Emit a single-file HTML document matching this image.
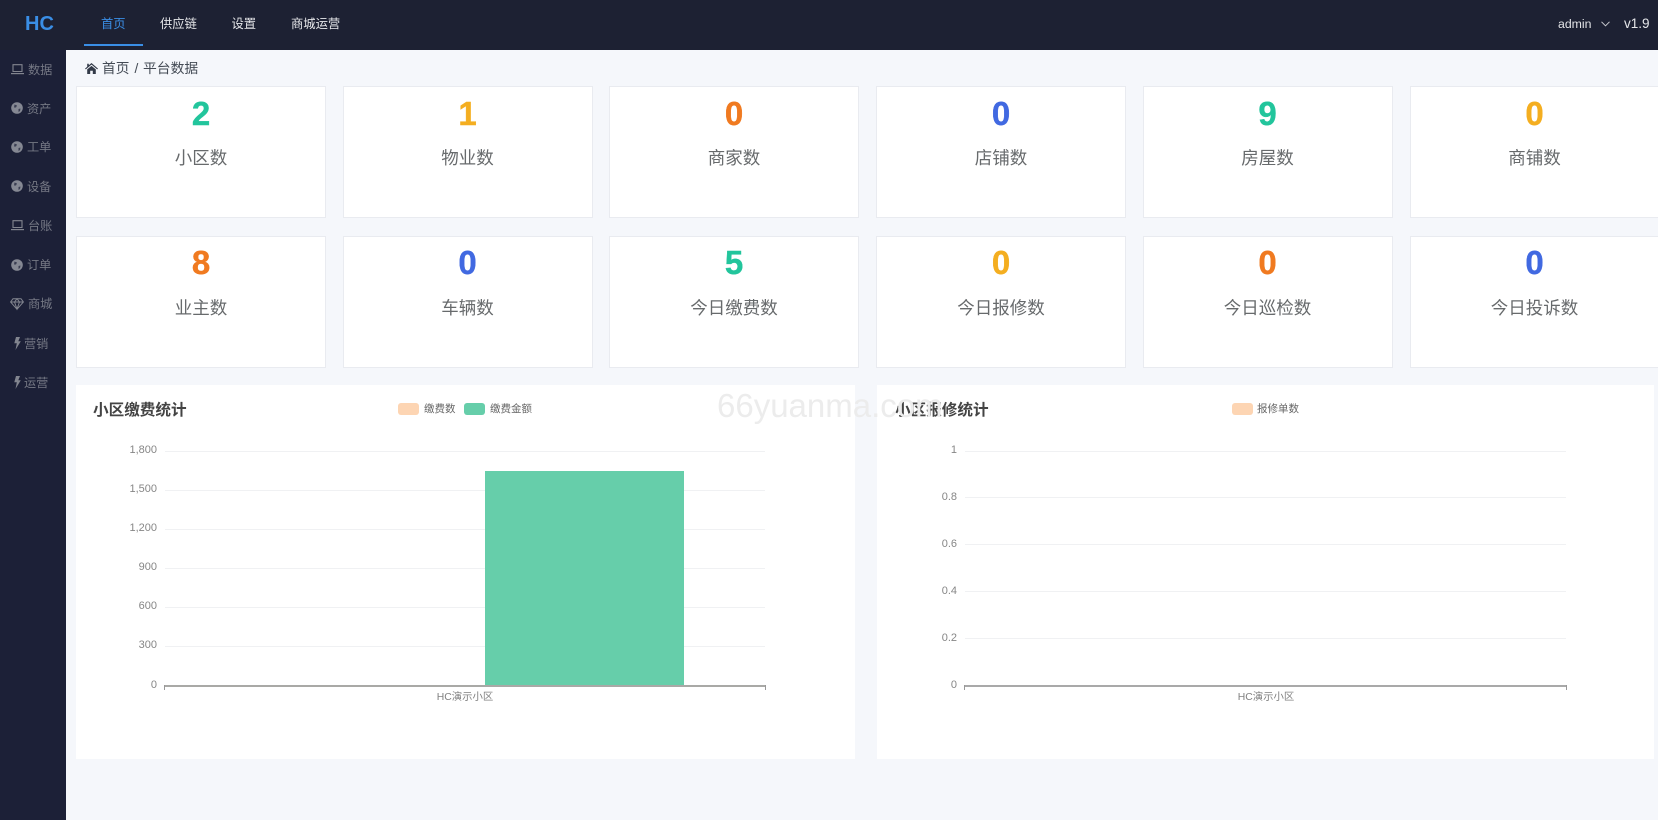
<!DOCTYPE html>
<html lang="zh"><head><meta charset="utf-8"><title>HC</title>
<style>
*{margin:0;padding:0;box-sizing:border-box}
html,body{width:1658px;height:820px;overflow:hidden;background:#f5f7fb}
body{position:relative;font-family:"Liberation Sans","Noto Sans CJK SC",sans-serif}
.a{position:absolute;white-space:nowrap}
#top{left:0;top:0;width:1658px;height:50px;background:#1d2133}
#side{left:0;top:50px;width:66px;height:770px;background:#1c2037}
.nav{top:14px;line-height:20px;font-size:12.3px;color:#e6e7ea}
.s{font-size:12.2px;line-height:18px;color:#757884}
.card{width:249.5px;height:132px;background:#fff;border:1px solid #e9ebf0}
.num{width:250px;text-align:center;font-size:33px;font-weight:700;line-height:36px;-webkit-text-stroke:.4px currentColor}
.lab{width:250px;text-align:center;font-size:17.5px;line-height:24px;color:#676a6c}
.g{color:#22c59c}.o{color:#f07a20}.y{color:#f4ae20}.b{color:#4169e1}
.panel{top:385px;height:374px;background:#fff}
.title{top:400px;font-size:15.6px;font-weight:700;line-height:22px;color:#444}
.leg{top:402px;font-size:10.5px;line-height:14px;color:#666}
.sw{top:403px;height:12px;border-radius:3px}
.yl{width:60px;text-align:right;font-size:11px;line-height:14px;color:#868686}
.xl{font-size:10.4px;line-height:14px;color:#808080;width:120px;text-align:center}
.gl{height:1px;background:#f0f1f3}
svg{position:absolute;overflow:visible}
</style></head><body>
<div id="top" class="a"></div>
<div id="side" class="a"></div>

<div class="a" style="left:25px;top:11px;font-size:20px;font-weight:700;line-height:26px;color:#3a8ee6">HC</div>
<div class="a nav" style="left:101px;color:#3a8ee6">首页</div>
<div class="a nav" style="left:160px">供应链</div>
<div class="a nav" style="left:231.5px">设置</div>
<div class="a nav" style="left:291px">商城运营</div>
<div class="a" style="left:84px;top:44px;width:59px;height:2px;background:#3a8ee6"></div>
<div class="a nav" style="left:1558px;color:#e2e3e6">admin</div>
<svg style="left:1601px;top:21px" width="9" height="6" viewBox="0 0 9 6"><path d="M.5.8 4.5 4.8 8.5.8" fill="none" stroke="#c9cad0" stroke-width="1"/></svg>
<div class="a nav" style="left:1624px;font-size:13.5px;color:#e6e7ea">v1.9</div>

<!-- sidebar -->
<svg style="left:11px;top:64px" width="13" height="11" viewBox="0 0 13 11"><path d="M2 .7H11V7.5H2Z" fill="none" stroke="#82858f" stroke-width="1.1"/><path d="M0 9H13V10.2H0Z" fill="#82858f"/></svg>
<div class="a s" style="left:28px;top:61px">数据</div>
<svg style="left:11px;top:102px" width="12" height="12" viewBox="0 0 12 12"><circle cx="6" cy="6" r="5.8" fill="#858893"/><path d="M3.5 2.5 6 3.5 5 5.5 3 5.5ZM7.5 7 9.5 6.5 9 9 7.5 10Z" fill="#3a3e52"/></svg>
<div class="a s" style="left:27px;top:100px">资产</div>
<svg style="left:11px;top:141px" width="12" height="12" viewBox="0 0 12 12"><circle cx="6" cy="6" r="5.8" fill="#858893"/><path d="M3.5 2.5 6 3.5 5 5.5 3 5.5ZM7.5 7 9.5 6.5 9 9 7.5 10Z" fill="#3a3e52"/></svg>
<div class="a s" style="left:27px;top:138px">工单</div>
<svg style="left:11px;top:180px" width="12" height="12" viewBox="0 0 12 12"><circle cx="6" cy="6" r="5.8" fill="#858893"/><path d="M3.5 2.5 6 3.5 5 5.5 3 5.5ZM7.5 7 9.5 6.5 9 9 7.5 10Z" fill="#3a3e52"/></svg>
<div class="a s" style="left:27px;top:178px">设备</div>
<svg style="left:11px;top:220px" width="13" height="11" viewBox="0 0 13 11"><path d="M2 .7H11V7.5H2Z" fill="none" stroke="#82858f" stroke-width="1.1"/><path d="M0 9H13V10.2H0Z" fill="#82858f"/></svg>
<div class="a s" style="left:28px;top:217px">台账</div>
<svg style="left:11px;top:259px" width="12" height="12" viewBox="0 0 12 12"><circle cx="6" cy="6" r="5.8" fill="#858893"/><path d="M3.5 2.5 6 3.5 5 5.5 3 5.5ZM7.5 7 9.5 6.5 9 9 7.5 10Z" fill="#3a3e52"/></svg>
<div class="a s" style="left:27px;top:256px">订单</div>
<svg style="left:10px;top:298px" width="14" height="12" viewBox="0 0 14 12"><path d="M3 .7H11L13.4 4 7 11.3.6 4ZM.6 4H13.4M4.5 4 7 11 9.5 4 7 .7 4.5 4" fill="none" stroke="#82858f" stroke-width="1"/></svg>
<div class="a s" style="left:28px;top:295px">商城</div>
<svg style="left:14px;top:337px" width="7" height="13" viewBox="0 0 7 13"><path d="M2 0H6L4.3 4.2H6.8L1.5 13 2.8 6.2H.3Z" fill="#82858f"/></svg>
<div class="a s" style="left:24px;top:335px">营销</div>
<svg style="left:14px;top:376px" width="7" height="13" viewBox="0 0 7 13"><path d="M2 0H6L4.3 4.2H6.8L1.5 13 2.8 6.2H.3Z" fill="#82858f"/></svg>
<div class="a s" style="left:24px;top:374px">运营</div>

<!-- breadcrumb -->
<svg style="left:85px;top:63px" width="13" height="11" viewBox="0 0 13 11"><path d="M6.5 0 13 5.6 12.2 6.4 6.5 1.6.8 6.4 0 5.6 2.2 3.7V.8H3.8V2.3Z" fill="#333a48"/><path d="M2.2 6.4 6.5 2.9 10.8 6.4V11H7.8V7.8H5.2V11H2.2Z" fill="#333a48"/></svg>
<div class="a" style="left:102px;top:59px;font-size:13.7px;line-height:20px;color:#444b55">首页</div>
<div class="a" style="left:134.5px;top:59px;font-size:13.7px;line-height:20px;color:#444b55">/</div>
<div class="a" style="left:143px;top:59px;font-size:13.8px;line-height:20px;color:#444b55">平台数据</div>

<!-- row 1 -->
<div class="a card" style="left:76px;top:86px"></div><div class="a num g" style="left:76px;top:95.5px">2</div><div class="a lab" style="left:76px;top:145.5px">小区数</div>
<div class="a card" style="left:343px;top:86px"></div><div class="a num y" style="left:342.5px;top:95.5px">1</div><div class="a lab" style="left:342.5px;top:145.5px">物业数</div>
<div class="a card" style="left:609px;top:86px"></div><div class="a num o" style="left:609px;top:95.5px">0</div><div class="a lab" style="left:609px;top:145.5px">商家数</div>
<div class="a card" style="left:876px;top:86px"></div><div class="a num b" style="left:876px;top:95.5px">0</div><div class="a lab" style="left:876px;top:145.5px">店铺数</div>
<div class="a card" style="left:1143px;top:86px"></div><div class="a num g" style="left:1142.5px;top:95.5px">9</div><div class="a lab" style="left:1142.5px;top:145.5px">房屋数</div>
<div class="a card" style="left:1410px;top:86px"></div><div class="a num y" style="left:1409.5px;top:95.5px">0</div><div class="a lab" style="left:1409.5px;top:145.5px">商铺数</div>
<!-- row 2 -->
<div class="a card" style="left:76px;top:236px"></div><div class="a num o" style="left:76px;top:245px">8</div><div class="a lab" style="left:76px;top:295.5px">业主数</div>
<div class="a card" style="left:343px;top:236px"></div><div class="a num b" style="left:342.5px;top:245px">0</div><div class="a lab" style="left:342.5px;top:295.5px">车辆数</div>
<div class="a card" style="left:609px;top:236px"></div><div class="a num g" style="left:609px;top:245px">5</div><div class="a lab" style="left:609px;top:295.5px">今日缴费数</div>
<div class="a card" style="left:876px;top:236px"></div><div class="a num y" style="left:876px;top:245px">0</div><div class="a lab" style="left:876px;top:295.5px">今日报修数</div>
<div class="a card" style="left:1143px;top:236px"></div><div class="a num o" style="left:1142.5px;top:245px">0</div><div class="a lab" style="left:1142.5px;top:295.5px">今日巡检数</div>
<div class="a card" style="left:1410px;top:236px"></div><div class="a num b" style="left:1409.5px;top:245px">0</div><div class="a lab" style="left:1409.5px;top:295.5px">今日投诉数</div>

<!-- panels -->
<div class="a panel" style="left:76px;width:778.5px"></div>
<div class="a panel" style="left:876.5px;width:777.5px"></div>

<!-- left chart -->
<div class="a title" style="left:93px">小区缴费统计</div>
<div class="a sw" style="left:398px;width:21px;background:#fdd5b3"></div>
<div class="a leg" style="left:424px">缴费数</div>
<div class="a sw" style="left:464px;width:21px;background:#66ceaa"></div>
<div class="a leg" style="left:490px">缴费金额</div>
<div class="a gl" style="left:165px;top:451px;width:600px"></div>
<div class="a gl" style="left:165px;top:490px;width:600px"></div>
<div class="a gl" style="left:165px;top:529px;width:600px"></div>
<div class="a gl" style="left:165px;top:568px;width:600px"></div>
<div class="a gl" style="left:165px;top:607px;width:600px"></div>
<div class="a gl" style="left:165px;top:646px;width:600px"></div>
<div class="a" style="left:485px;top:471px;width:199px;height:215px;background:#66ceaa"></div>
<div class="a" style="left:164px;top:685px;width:602px;height:1.5px;background:#a9a9a6"></div>
<div class="a" style="left:164px;top:685px;width:1px;height:5px;background:#999"></div>
<div class="a" style="left:765px;top:685px;width:1px;height:5px;background:#999"></div>
<div class="a yl" style="left:97px;top:443px">1,800</div>
<div class="a yl" style="left:97px;top:482px">1,500</div>
<div class="a yl" style="left:97px;top:521px">1,200</div>
<div class="a yl" style="left:97px;top:560px">900</div>
<div class="a yl" style="left:97px;top:599px">600</div>
<div class="a yl" style="left:97px;top:638px">300</div>
<div class="a yl" style="left:97px;top:678px">0</div>
<div class="a xl" style="left:405px;top:690.5px">HC演示小区</div>

<!-- right chart -->
<div class="a title" style="left:895px">小区报修统计</div>
<div class="a sw" style="left:1232px;width:21px;background:#fdd5b3"></div>
<div class="a leg" style="left:1257px">报修单数</div>
<div class="a gl" style="left:965px;top:451px;width:601px"></div>
<div class="a gl" style="left:965px;top:497px;width:601px"></div>
<div class="a gl" style="left:965px;top:544px;width:601px"></div>
<div class="a gl" style="left:965px;top:591px;width:601px"></div>
<div class="a gl" style="left:965px;top:638px;width:601px"></div>
<div class="a" style="left:964px;top:685px;width:603px;height:1.5px;background:#a9a9a9"></div>
<div class="a" style="left:964px;top:685px;width:1px;height:5px;background:#999"></div>
<div class="a" style="left:1566px;top:685px;width:1px;height:5px;background:#999"></div>
<div class="a yl" style="left:897px;top:443px">1</div>
<div class="a yl" style="left:897px;top:490px">0.8</div>
<div class="a yl" style="left:897px;top:537px">0.6</div>
<div class="a yl" style="left:897px;top:584px">0.4</div>
<div class="a yl" style="left:897px;top:631px">0.2</div>
<div class="a yl" style="left:897px;top:678px">0</div>
<div class="a xl" style="left:1206px;top:690.5px">HC演示小区</div>

<!-- watermark overlays the right panel title -->
<div class="a" style="left:717px;top:387px;font-size:33px;line-height:38px;color:#ececec">66yuanma.com</div>
</body></html>
